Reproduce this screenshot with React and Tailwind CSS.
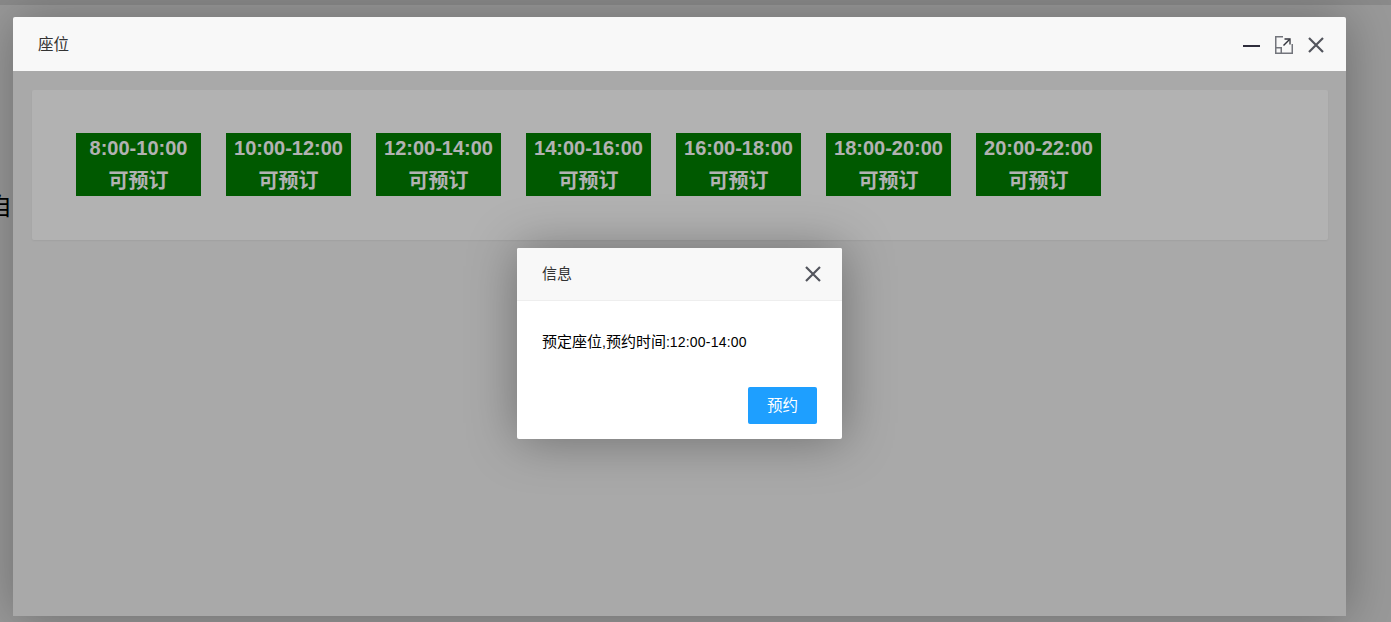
const SLOTS = ['8:00-10:00', '10:00-12:00', '12:00-14:00', '14:00-16:00', '16:00-18:00', '18:00-20:00', '20:00-22:00']

const FONT = 'font-["Liberation_Sans","Noto_Sans_CJK_SC",sans-serif]'

function CloseIcon() {
    return (
        <svg width="16" height="16" viewBox="0 0 16 16" fill="none" stroke="#53555d" strokeWidth="2.2">
            <path d="M1 1 L15 15 M15 1 L1 15" />
        </svg>
    )
}

function MaxIcon() {
    return (
        <svg width="18" height="18" viewBox="0 0 18 18" fill="none">
            <path d="M8 .75 H.75 V17.25 H17.25 V8" stroke="#73757c" strokeWidth="1.5" />
            <path d="M.75 11.75 H6.25 V17.25" stroke="#73757c" strokeWidth="1.5" />
            <path d="M8.5 9.5 L14.5 3.5" stroke="#33353c" strokeWidth="1.5" />
            <path d="M9.5 3 H15 V8.5" stroke="#33353c" strokeWidth="1.3" />
        </svg>
    )
}

function Slot({ time }) {
    return (
        <div className="w-[125px] h-[63px] bg-[#008000] text-white text-[20px] font-bold text-center">
            <div className="leading-[30px]">{time}</div>
            <div className="mt-[2px] leading-[33px]">可预订</div>
        </div>
    )
}

export default function App() {
    return (
        <div className={`relative h-[622px] overflow-hidden bg-[#999999] ${FONT}`}>
            <div className="absolute left-0 right-0 top-0 h-[5px] bg-[#8a8a8a]" />
            <div className="absolute left-[-12px] top-[192px] text-[24px] leading-[30px] text-black">自</div>

            <div className="absolute left-[13px] top-[17px] w-[1333px] h-[599px] flex flex-col rounded-t-[2px] shadow-[1px_1px_50px_rgba(0,0,0,0.3)]">
                <div className="h-[54px] shrink-0 flex items-center justify-between pl-[25px] pr-[22px] bg-[#f8f8f8] text-[15.5px] text-[#333333] rounded-t-[2px]">
                    <span className="pt-px">座位</span>
                    <div className="flex items-center pt-px">
                        <div className="w-[17px] h-[2px] bg-[#2e2d3c] mt-[2px] mr-[15px]" />
                        <MaxIcon />
                        <div className="ml-[15px]"><CloseIcon /></div>
                    </div>
                </div>

                <div className="relative flex-1 bg-[#f2f2f2] p-[19px] pr-[18px]">
                    <div className="h-[150px] rounded-[2px] bg-white shadow-[0_1px_2px_rgba(0,0,0,0.05)] pl-[44px] pt-[43px] flex gap-[25px]">
                        {SLOTS.map(s => <Slot key={s} time={s} />)}
                    </div>

                    <div className="absolute inset-0 bg-black/30" />

                    <div className="absolute left-[504px] top-[177px] w-[325px] h-[191px] flex flex-col rounded-[2px] bg-white shadow-[1px_1px_50px_rgba(0,0,0,0.35)]">
                        <div className="h-[53px] shrink-0 flex items-center justify-between pl-[25px] pr-[21px] bg-[#f8f8f8] border-b border-[#eeeeee] text-[15px] text-[#333333] rounded-t-[2px]">
                            <span>信息</span>
                            <CloseIcon />
                        </div>
                        <div className="px-[25px] pt-[31px] text-[14px] leading-[20px] text-black">
                            <span className="text-[15px]">预定座位</span>,<span className="text-[15px]">预约时间</span>:<span className="tracking-[0.2px]">12:00-14:00</span>
                        </div>
                        <div className="mt-auto flex justify-end pr-[25px] pb-[15px]">
                            <button className="w-[69px] h-[37px] pt-px rounded-[2px] bg-[#1e9fff] text-white text-[15.5px]">预约</button>
                        </div>
                    </div>
                </div>
            </div>
        </div>
    )
}
